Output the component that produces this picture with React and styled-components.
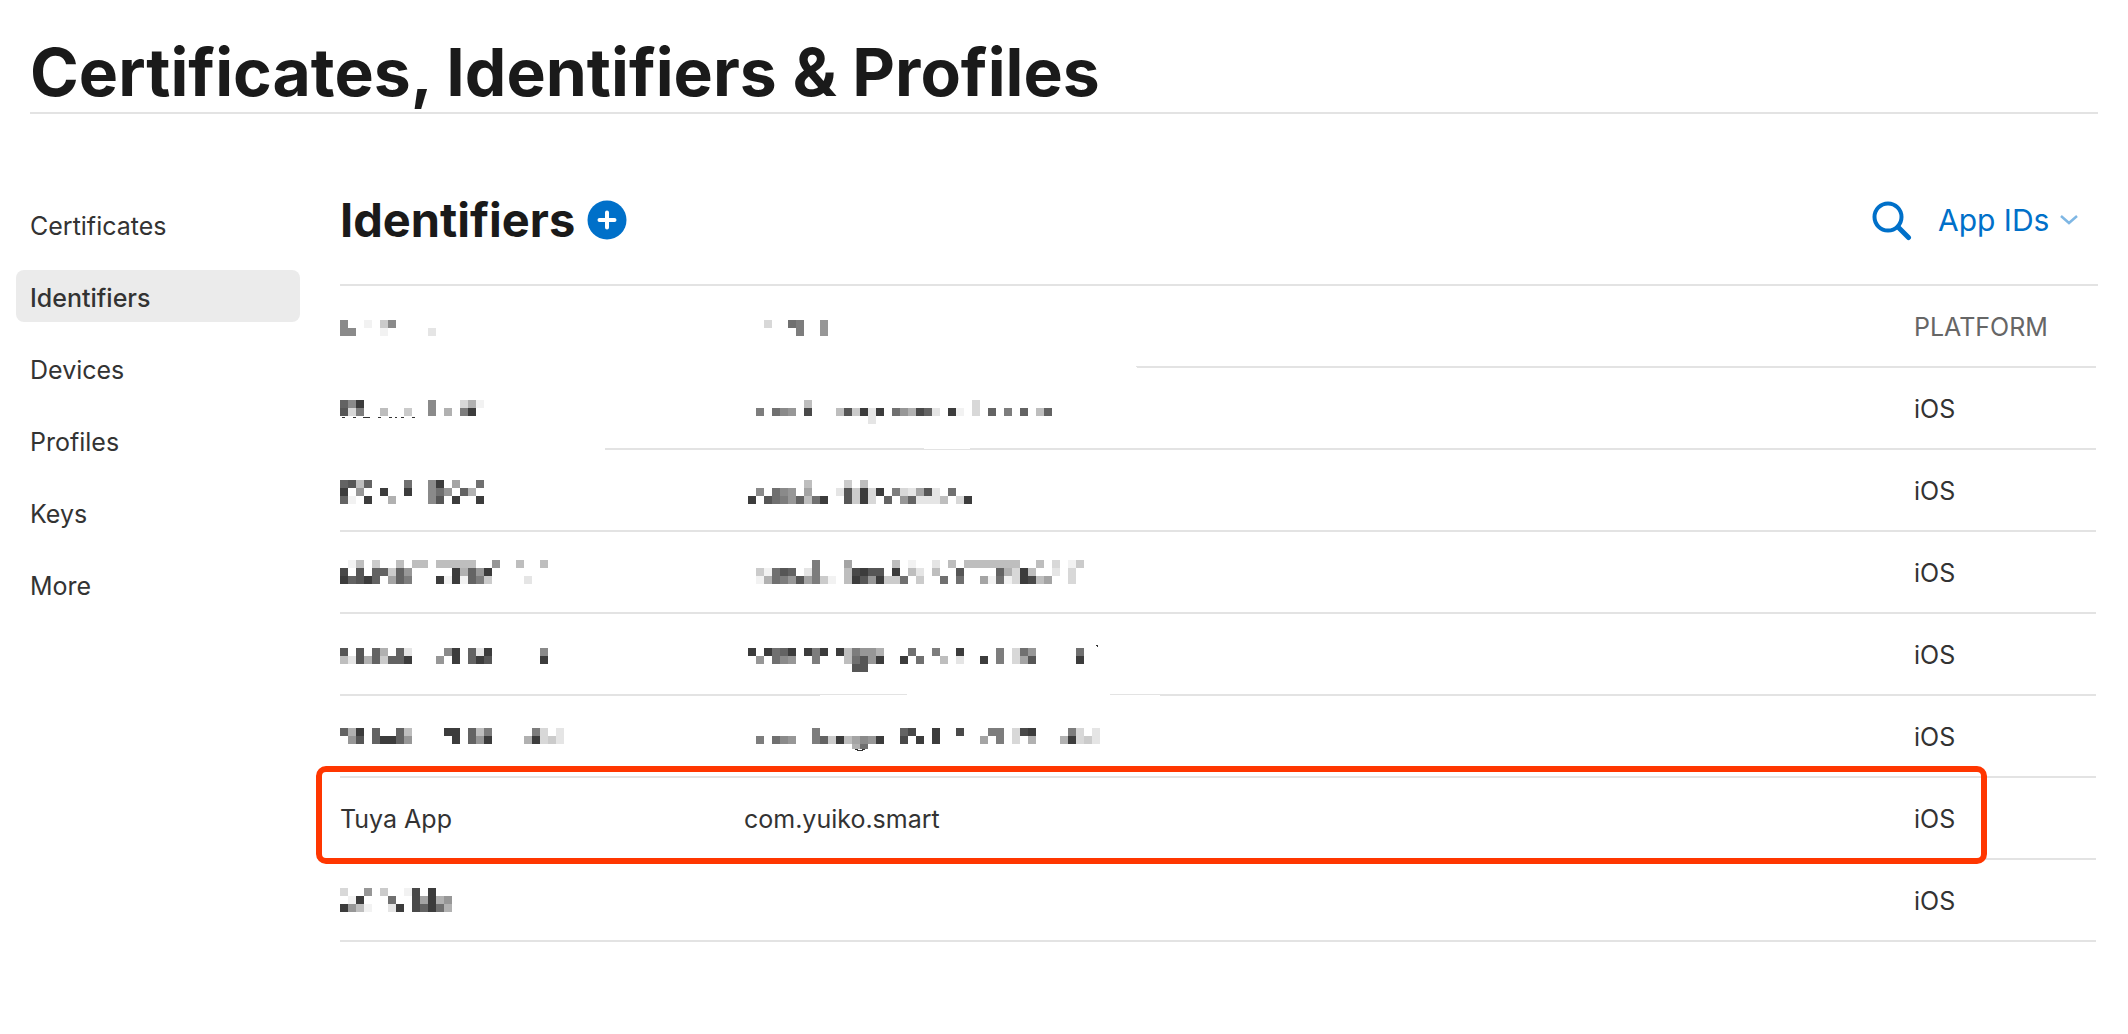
import React from "react";
import styled, { createGlobalStyle } from "styled-components";

const GlobalStyle = createGlobalStyle`
  * { box-sizing: border-box; }
  body {
    margin: 0;
    background: #fff;
    color: #333;
    font-family: Inter, "Liberation Sans", sans-serif;
    font-size: 25px;
    line-height: 32px;
  }
`;

const Page = styled.div`
  padding: 32px 30px;
`;

const PageTitle = styled.h1`
  margin: 0;
  border-bottom: 2px solid #e3e3e3;
  color: #1a1a1a;
  font-size: 66px;
  font-weight: 700;
  line-height: 80px;
`;

const Columns = styled.div`
  display: grid;
  grid-template-columns: 284px minmax(0, 1fr);
  column-gap: 40px;
  margin: 72px 0 0 -14px;
`;

const SideNav = styled.nav`
  display: flex;
  flex-direction: column;
  gap: 20px;
  padding-top: 12px;
`;

const NavLink = styled.a`
  padding: 12px 14px 8px;
  border-radius: 8px;
  background: ${(p) => (p.$active ? "#ebebeb" : "transparent")};
  color: #333;
  font-weight: ${(p) => (p.$active ? 500 : 400)};
  text-decoration: none;
`;

const SectionBar = styled.header`
  display: flex;
  align-items: center;
  justify-content: space-between;
  height: 100px;
  padding: 0 20px 30px 0;
  border-bottom: 2px solid #e3e3e3;
`;

const TitleGroup = styled.div`
  display: flex;
  align-items: center;
  gap: 12px;
`;

const SectionTitle = styled.h2`
  margin: 0;
  color: #1a1a1a;
  font-size: 47px;
  font-weight: 700;
  line-height: 56px;
`;

const IconButton = styled.button`
  display: flex;
  padding: 0;
  border: 0;
  background: none;
  color: #0070c9;
`;

const Tools = styled.div`
  display: flex;
  align-items: center;
  gap: 26px;
`;

const Picker = styled.label`
  display: flex;
  align-items: center;
  gap: 10px;
  color: #0070c9;
`;

const PickerSelect = styled.select`
  appearance: none;
  padding: 0;
  border: 0;
  background: none;
  color: inherit;
  font-family: inherit;
  font-size: 30px;
  line-height: 40px;
`;

const Table = styled.table`
  width: calc(100% - 2px);
  border-spacing: 0;
  table-layout: fixed;
`;

const Row = styled.tr`
  position: relative;
`;

const Cell = styled.td`
  width: ${(p) => p.$width || "auto"};
  height: 82px;
  padding: 2px 0 0;
  border-bottom: 2px solid #e3e3e3;
  text-align: left;
  vertical-align: middle;
`;

const HeadCell = styled(Cell)`
  color: #666;
  font-weight: 400;
`;

const Highlight = styled.span`
  position: absolute;
  inset: -12px 109px -4px -24px;
  border: 6px solid #ff3600;
  border-radius: 10px;
  pointer-events: none;
`;

const MosaicSvg = styled.svg`
  display: block;
  margin-top: -2px;
  overflow: visible;
`;

const TILE = 8;

const shade = (digit) => {
  const level = 255 - parseInt(digit, 16) * 13;
  return `rgb(${level}, ${level}, ${level})`;
};

/* Each string is one line of tiles; a hex digit is its darkness, a dot is empty. */
function Mosaic({ lines, top, left = 0, children }) {
  return (
    <MosaicSvg width="380" height="80" role="img" aria-label="Hidden value" shapeRendering="crispEdges">
      {lines.map((line, y) =>
        [...line].map((digit, x) =>
          digit === "." ? null : (
            <rect
              key={`${x}-${y}`}
              x={left + x * TILE}
              y={top + y * TILE}
              width={TILE}
              height={TILE}
              fill={shade(digit)}
            />
          )
        )
      )}
      {children}
    </MosaicSvg>
  );
}

const records = [
  {
    top: 32,
    name: ["c9f........9...361", "d3a..5..4..9.6.af"],
    id: [
      ".......5....................3",
      ".a.b98.e...5d4f2f.b86ec2.f1.3.c.a.c.5c",
      "...............2",
    ],
    nameExtra: (
      <>
        <path fill="#333" d="M2 49h3v1h-3zM13 49h3v1h-3zM23 49h7v1h-7zM38 49h3v1h-3zM49 49h3v1h-3zM55 49h2v1h-2zM61 49h3v1h-3zM72 49h3v1h-3z" />
        <path fill="#fff" d="M0 80h265v2h-265zM577 80h60l-14 1h-32z" />
      </>
    ),
  },
  {
    top: 30,
    name: ["cd5c....b..9f.7..b", "f.8..f..f..9b8.c6", "c1.f..6....9d.f..f"],
    id: [".......5....4.5", ".9.b98.7...2d4f3f.a327d2.b", "f.dba8c5bf..d4f3.c.8c2225.3f"],
  },
  {
    top: 28,
    name: [".15.4..5.55.55555..8..5..5", "e.d.cc4c8.....f6c8f", "fcdfc.7ca...f1f1ca4....2"],
    id: [
      "........a...7.....5.1..2.5.5555555..5.3.14",
      ".41bdc.2a...5efdd.f.52.5..d....c63f5..2.3",
      ".16ba8d7a41.5fd8f44b.4..b.b..71b13fe57..3",
    ],
  },
  {
    top: 34,
    name: ["d.d.c6.c2....9f.c2f......9", "52d6c4ccf...8.f.cfd......f"],
    id: [
      "f.fbcf.faf.f5a886...b..a..f....a.3b8.....b",
      ".8.b98..a...5bd8f..f.b..5.2..f.a.37d.....f",
      ".............dd",
    ],
    nameExtra: <path fill="#fff" d="M480 82v-1h87v-1h203v1h50v1z" />,
    idExtra: <path fill="#333" d="M352 31h2v2h-1v-1h-1z" />,
  },
  {
    top: 32,
    name: ["c6f.c..c5....ff.c5a.....a3.2", ".8d.cffc8.....f.c8f....6f342"],
    id: [
      "........a..........ce..f..e...aa.3ef....a3.2",
      ".a.b98..ac4f5798f..e.f.f.....7.a.3.6...6f342",
      ".............6b",
    ],
    idExtra: (
      <>
        <path fill="#fff" d="M106 53h20v4h-20z" />
        <path fill="#333" d="M111 53h3v1h4v-1h3v1h-2v1h-6v-1h-2z" />
      </>
    ),
  },
  { nameText: "Tuya App", idText: "com.yuiko.smart", highlighted: true },
  {
    top: 28,
    name: ["3..8.4..1e.f", ".1f...b..e7f68", "f851..2f.ecfb6"],
  },
];

const navItems = ["Certificates", "Identifiers", "Devices", "Profiles", "Keys", "More"];

function PlusIcon() {
  return (
    <svg width="40" height="40" viewBox="0 0 40 40" aria-hidden="true">
      <circle cx="20" cy="20" r="19.5" fill="#0070c9" />
      <path d="M20 12.5v15M12.5 20h15" stroke="#fff" strokeWidth="4" strokeLinecap="round" />
    </svg>
  );
}

function SearchIcon() {
  return (
    <svg width="40" height="42" viewBox="0 -2 40 42" fill="none" stroke="currentColor" aria-hidden="true">
      <circle cx="16" cy="16" r="13.5" strokeWidth="4" />
      <path d="M26 26l10.5 10.5" strokeWidth="5" strokeLinecap="round" />
    </svg>
  );
}

function ChevronIcon() {
  return (
    <svg width="18" height="10" viewBox="0 0 18 10" fill="none" aria-hidden="true">
      <path d="M1 1l8 7 8-7" stroke="#7fb7e4" strokeWidth="2.5" />
    </svg>
  );
}

export default function App() {
  return (
    <>
      <GlobalStyle />
      <Page>
        <PageTitle>Certificates, Identifiers &amp; Profiles</PageTitle>
        <Columns>
          <SideNav aria-label="Resources">
            {navItems.map((item) => (
              <NavLink key={item} href="#" $active={item === "Identifiers"}>
                {item}
              </NavLink>
            ))}
          </SideNav>
          <main>
            <SectionBar>
              <TitleGroup>
                <SectionTitle>Identifiers</SectionTitle>
                <IconButton type="button" aria-label="Register a new identifier">
                  <PlusIcon />
                </IconButton>
              </TitleGroup>
              <Tools>
                <IconButton type="button" aria-label="Search">
                  <SearchIcon />
                </IconButton>
                <Picker>
                  <PickerSelect aria-label="Identifier type" defaultValue="App IDs">
                    <option>App IDs</option>
                  </PickerSelect>
                  <ChevronIcon />
                </Picker>
              </Tools>
            </SectionBar>
            <Table>
              <thead>
                <Row>
                  <HeadCell as="th" scope="col" $width="404px">
                    <Mosaic top={34} lines={["9..1.49", "99...1.....2"]}>
                      <path fill="#fff" d="M0 80h795l2 2h-797z" />
                    </Mosaic>
                  </HeadCell>
                  <HeadCell as="th" scope="col">
                    <Mosaic top={34} left={4} lines={["..3..ba..8", "......a..8"]} />
                  </HeadCell>
                  <HeadCell as="th" scope="col" $width="182px">
                    PLATFORM
                  </HeadCell>
                </Row>
              </thead>
              <tbody>
                {records.map((record, index) => (
                  <Row key={index}>
                    <Cell>
                      {record.nameText || (
                        <Mosaic top={record.top} lines={record.name}>
                          {record.nameExtra}
                        </Mosaic>
                      )}
                      {record.highlighted && <Highlight />}
                    </Cell>
                    <Cell>
                      {record.idText ||
                        (record.id && (
                          <Mosaic top={record.top} left={4} lines={record.id}>
                            {record.idExtra}
                          </Mosaic>
                        ))}
                    </Cell>
                    <Cell>iOS</Cell>
                  </Row>
                ))}
              </tbody>
            </Table>
          </main>
        </Columns>
      </Page>
    </>
  );
}
